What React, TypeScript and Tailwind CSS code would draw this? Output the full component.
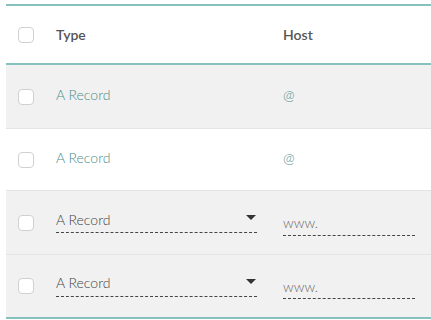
import React from "react";

const Checkbox = () => (
  <div className="w-[16px] h-[16px] rounded-[4px] border border-[#d0d0d0] bg-white shrink-0" />
);

const Dashed = ({ className = "" }: { className?: string }) => (
  <div className={"border-b border-dashed border-[#444] " + className} />
);

export default function App() {
  const font = { fontFamily: "Lato, 'Open Sans', sans-serif" };
  return (
    <div className="w-[431px] h-[320px] bg-white pt-[4px] pl-[6px]" style={font}>
      <div className="border-t-2 border-b-2 border-[#86c1bd]">
        <div className="h-[59px] flex items-center border-b-2 border-[#86c1bd] text-[14px] font-semibold text-[#555]">
          <div className="w-[50px] pl-[12px] flex items-center pt-[1px]">
            <Checkbox />
          </div>
          <div className="w-[227px]">Type</div>
          <div>Host</div>
        </div>
        <div className="h-[64px] bg-[#f1f1f1] border-b border-[#e4e4e4] flex items-center text-[14px] font-light text-[#4a8c87]">
          <div className="w-[50px] pl-[12px] flex items-center">
            <Checkbox />
          </div>
          <div className="w-[227px] -mt-[4px]">A Record</div>
          <div className="-mt-[4px]">@</div>
        </div>
        <div className="h-[62px] bg-white border-b border-[#e4e4e4] flex items-center text-[14px] font-light text-[#4a8c87]">
          <div className="w-[50px] pl-[12px] flex items-center">
            <Checkbox />
          </div>
          <div className="w-[227px] -mt-[4px]">A Record</div>
          <div className="-mt-[4px]">@</div>
        </div>
        {[0, 1].map((i) => (
          <div
            key={i}
            className={
              "bg-[#f1f1f1] flex items-center text-[14px] font-light text-[#444] " +
              (i === 0 ? "h-[64px] border-b border-[#e4e4e4]" : "h-[62px]")
            }
          >
            <div className="w-[50px] pl-[12px] flex items-center">
              <Checkbox />
            </div>
            <div className="w-[227px]">
              <div className="w-[201px] -mt-[2px]">
                <div className="flex items-center justify-between pr-[1px] h-[18px]">
                  <span>A Record</span>
                  <svg width="10" height="6" viewBox="0 0 10 6" className="mt-[-2px]">
                    <path d="M0 0 L10 0 L5 5 Z" fill="#333" />
                  </svg>
                </div>
                <Dashed className="mt-[4px]" />
              </div>
            </div>
            <div className="w-[132px] mt-[4px] text-[#666]">
              <div className="h-[18px] flex items-center">www.</div>
              <Dashed className="mt-[3px]" />
            </div>
          </div>
        ))}
      </div>
    </div>
  );
}
